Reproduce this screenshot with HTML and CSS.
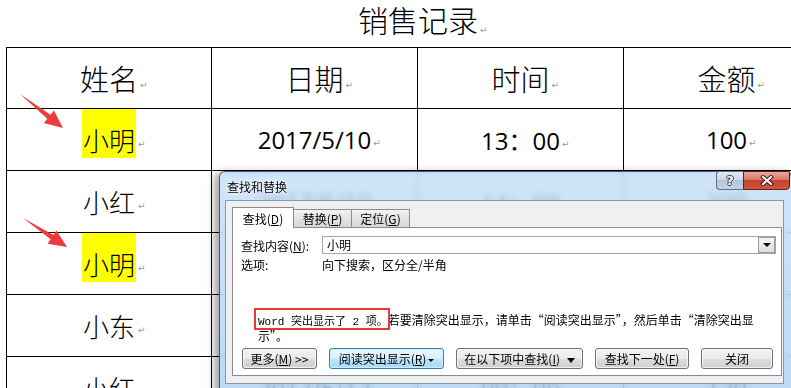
FILE: index.html
```html
<!DOCTYPE html>
<html lang="zh-CN">
<head>
  <meta charset="UTF-8" />
  <title>销售记录</title>
  <link rel="stylesheet" href="styles.css">
</head>
<body>

  <div class="doc">
    <h1 class="doc-title"><span class="t">销售记录<i class="ret">↵</i></span></h1>

    <table class="sales">
      <colgroup>
        <col class="c1"><col class="c2"><col class="c3"><col class="c4">
      </colgroup>
      <tr class="head">
        <td><span class="t">姓名<i class="ret">↵</i></span></td>
        <td><span class="t">日期<i class="ret">↵</i></span></td>
        <td><span class="t">时间<i class="ret">↵</i></span></td>
        <td><span class="t">金额<i class="ret">↵</i></span></td>
      </tr>
      <tr>
        <td><span class="t nm hl">小明<i class="ret">↵</i></span></td>
        <td class="num"><span class="t">2017/5/10<i class="ret">↵</i></span></td>
        <td class="num"><span class="t">13：00<i class="ret">↵</i></span></td>
        <td class="num"><span class="t">100<i class="ret">↵</i></span></td>
      </tr>
      <tr>
        <td><span class="t nm">小红<i class="ret">↵</i></span></td>
        <td class="num"><span class="t">2017/5/10<i class="ret">↵</i></span></td>
        <td class="num"><span class="t">14：00<i class="ret">↵</i></span></td>
        <td class="num"><span class="t">200<i class="ret">↵</i></span></td>
      </tr>
      <tr>
        <td><span class="t nm hl">小明<i class="ret">↵</i></span></td>
        <td class="num"><span class="t">2017/5/11<i class="ret">↵</i></span></td>
        <td class="num"><span class="t">10：00<i class="ret">↵</i></span></td>
        <td class="num"><span class="t">150<i class="ret">↵</i></span></td>
      </tr>
      <tr>
        <td><span class="t nm">小东<i class="ret">↵</i></span></td>
        <td class="num"><span class="t">2017/5/11<i class="ret">↵</i></span></td>
        <td class="num"><span class="t">15：00<i class="ret">↵</i></span></td>
        <td class="num"><span class="t">300<i class="ret">↵</i></span></td>
      </tr>
      <tr>
        <td><span class="t nm">小红<i class="ret">↵</i></span></td>
        <td class="num"><span class="t">2017/5/12<i class="ret">↵</i></span></td>
        <td class="num"><span class="t">09：00<i class="ret">↵</i></span></td>
        <td class="num"><span class="t">120<i class="ret">↵</i></span></td>
      </tr>
    </table>
  </div>

  <!-- red pointer arrows drawn on the screenshot -->
  <svg class="arrows" width="791" height="388" viewBox="0 0 791 388">
    <polygon points="20,94 50.5,114.8 53.9,110.5 63,128 43.9,123.1 47.3,118.8" />
    <polygon points="23,218 53.4,235 56.4,230.4 67,247 47.6,243.8 50.6,239.2" />
  </svg>

  <div class="dlg">
    <div class="dlg-bar">
      <div class="dlg-title">查找和替换</div>
      <div class="cap">
        <div class="cap-help">?</div>
        <div class="cap-close">
          <svg width="14" height="11" viewBox="0 0 14 11">
            <path d="M3 2 L11 9 M11 2 L3 9" stroke="#3a1a16" stroke-width="4" stroke-linecap="square" fill="none"/>
            <path d="M3 2 L11 9 M11 2 L3 9" stroke="#fff" stroke-width="2" stroke-linecap="square" fill="none"/>
          </svg>
        </div>
      </div>
    </div>

    <div class="dlg-body">
      <div class="tabs">
        <div class="tab active">查找(<u>D</u>)</div>
        <div class="tab">替换(<u>P</u>)</div>
        <div class="tab">定位(<u>G</u>)</div>
      </div>

      <div class="panel">
        <div class="row find-row">
          <span class="lbl">查找内容(<u>N</u>):</span>
          <div class="combo">
            <span class="combo-text">小明</span>
            <span class="combo-btn"><i class="caret"></i></span>
          </div>
        </div>
        <div class="row opt-row">
          <span class="lbl">选项:</span>
          <span>向下搜索，区分全/半角</span>
        </div>

        <p class="msg"><span class="mark">Word 突出显示了 2 项。</span>若要清除突出显示，请单击“阅读突出显示”，然后单击“清除突出显<br>示”。</p>

        <div class="btns">
          <button class="btn b-more">更多(<u>M</u>) &gt;&gt;</button>
          <button class="btn b-read default">阅读突出显示(<u>R</u>)<i class="caret"></i></button>
          <button class="btn b-in">在以下项中查找(<u>I</u>) <i class="caret"></i></button>
          <button class="btn b-next">查找下一处(<u>F</u>)</button>
          <button class="btn b-close">关闭</button>
        </div>
      </div>
    </div>
  </div>

</body>
</html>
```

FILE: styles.css
```css
* {
  margin: 0;
  padding: 0;
  box-sizing: border-box;
}

body {
  position: relative;
  width: 791px;
  height: 388px;
  overflow: hidden;
  background: #fff;
  color: #000;
  font-family: "Noto Sans CJK SC", sans-serif;
}

/* document */

.doc {
  width: 830px;
  padding-left: 6px;
}

.doc-title {
  height: 47px;
  line-height: 38px;
  text-align: center;
  font-size: 30px;
  font-weight: 300;
}

.t {
  position: relative;
}

.ret {
  position: absolute;
  left: 100%;
  bottom: 6px;
  margin-left: 2px;
  font-family: "DejaVu Sans", sans-serif;
  font-style: normal;
  font-weight: normal;
  font-size: 9px;
  line-height: 1;
  color: #999;
}

.sales {
  width: 824px;
  table-layout: fixed;
  border-collapse: collapse;
}

.sales col {
  width: 206px;
}

.sales col.c1 {
  width: 205px;
}

.sales td {
  height: 61px;
  padding: 0;
  border: 1px solid #000;
  text-align: center;
  vertical-align: middle;
  font-size: 26px;
  font-weight: 300;
}

.sales .head td {
  font-size: 29px;
}

.sales .head .ret {
  bottom: 9px;
}

.nm {
  display: inline-block;
  padding: 14px 1px 2px;
  margin-bottom: 12px;
  line-height: 33px;
}

.nm .ret {
  bottom: 9px;
}

.hl {
  background: #ffff00;
}

.num {
  font-family: "Open Sans", "Noto Sans CJK SC", sans-serif;
}

.sales td.num {
  font-size: 24px;
  font-weight: normal;
}

.num .ret {
  bottom: 8px;
}

.arrows {
  position: absolute;
  left: 0;
  top: 0;
  fill: #ec3b3b;
}

/* find & replace dialog */

.dlg {
  position: absolute;
  left: 219px;
  top: 171px;
  width: 573px;
  height: 222px;
  border: 1px solid rgba(40, 58, 84, 0.8);
  border-radius: 6px 6px 0 0;
  background: linear-gradient(180deg, rgba(196, 222, 248, 0.8), rgba(172, 208, 243, 0.8));
  backdrop-filter: blur(3px);
  box-shadow: -4px 2px 8px rgba(0, 0, 0, 0.4);
  font-size: 12px;
}

.dlg-bar {
  display: flex;
  height: 28px;
}

.dlg-title {
  flex: 1;
  padding: 8px 0 0 7px;
  line-height: 14px;
  text-shadow: 0 0 6px #fff, 0 0 3px #fff;
}

.cap {
  display: flex;
  height: 19px;
  margin: -1px 1px 0 0;
}

.cap-help {
  width: 27px;
  border: 1px solid #5f7088;
  border-right: none;
  border-radius: 3px 0 0 4px;
  background: linear-gradient(180deg, #e2ebf6 0%, #cbd9ea 45%, #b3c5dc 50%, #c3d3e6 100%);
  color: #fff;
  font-family: "DejaVu Sans", sans-serif;
  font-weight: bold;
  font-size: 13px;
  line-height: 17px;
  text-align: center;
  text-shadow: 1px 0 #2c3a4e, -1px 0 #2c3a4e, 0 1px #2c3a4e, 0 -1px #2c3a4e;
}

.cap-close {
  display: flex;
  align-items: center;
  justify-content: center;
  width: 47px;
  border: 1px solid #5a231c;
  border-radius: 0 0 4px 0;
  background: linear-gradient(180deg, #eaa79a 0%, #d97a68 45%, #c5432f 50%, #d2543d 100%);
}

.dlg-body {
  width: 559px;
  height: 184px;
  margin-left: 5px;
  padding: 6px 1px 7px 6px;
  background: #f0f0f0;
  border: 1px solid #8598b0;
}

.tabs {
  position: relative;
  z-index: 1;
  display: flex;
  align-items: flex-start;
  height: 21px;
}

.tab {
  width: 58px;
  height: 18px;
  margin-top: 2px;
  border: 1px solid #898c95;
  border-bottom: none;
  border-left: none;
  background: linear-gradient(180deg, #f4f4f4, #e3e3e3 50%, #d6d6d6);
  line-height: 17px;
  text-align: center;
}

.tab.active {
  width: 62px;
  height: 21px;
  margin-top: 0;
  border-left: 1px solid #898c95;
  background: #fff;
  line-height: 21px;
}

.panel {
  height: 149px;
  margin-top: -1px;
  padding: 8px 6px 6px 8px;
  background: #fff;
  border: 1px solid #898c95;
}

.row {
  display: flex;
  align-items: center;
}

.lbl {
  width: 81px;
}

.find-row {
  height: 18px;
}

.combo {
  flex: 1;
  display: flex;
  height: 18px;
  margin-right: -1px;
  border: 1px solid #a5a7ac;
}

.combo-text {
  flex: 1;
  padding-left: 4px;
  line-height: 16px;
}

.combo-btn {
  display: flex;
  align-items: center;
  justify-content: center;
  width: 17px;
  height: 16px;
  border: 1px solid #9a9a9a;
  background: linear-gradient(180deg, #f6f6f6, #dedede);
}

.caret {
  display: inline-block;
  width: 0;
  height: 0;
  border-left: 4px solid transparent;
  border-right: 4px solid transparent;
  border-top: 4px solid #000;
  vertical-align: middle;
}

.opt-row {
  height: 16px;
  margin-top: 2px;
}

.msg {
  margin-top: 41px;
  padding-left: 17px;
  line-height: 14px;
  height: 28px;
}

.mark {
  position: relative;
  font-family: "Liberation Mono", "Noto Sans CJK SC", monospace;
  font-size: 11px;
}

.mark::after {
  content: "";
  position: absolute;
  left: -4px;
  right: -2px;
  top: -8px;
  bottom: -2px;
  border: 2px solid #ee3535;
}

.btns {
  display: flex;
  gap: 12px;
  margin-top: 7px;
  padding-left: 1px;
}

.btn {
  height: 21px;
  border: 1px solid #707070;
  border-radius: 3px;
  background: linear-gradient(180deg, #f2f2f2 0%, #ebebeb 50%, #dddddd 50%, #cfcfcf 100%);
  box-shadow: inset 0 0 0 1px rgba(255, 255, 255, 0.7);
  font-family: "Noto Sans CJK SC", sans-serif;
  font-size: 12px;
  line-height: 17px;
  color: #000;
}

.btn.default {
  border-color: #3c7fb1;
  background: linear-gradient(180deg, #eaf6fd 0%, #d9f0fc 50%, #bee6fd 50%, #a7d9f5 100%);
  box-shadow: inset 0 0 0 1px #cdeefc;
}

.btn .caret {
  margin-left: 2px;
  border-left-width: 3px;
  border-right-width: 3px;
  border-top-width: 3px;
}

.b-in .caret {
  margin-left: 4px;
  border-left-width: 4px;
  border-right-width: 4px;
  border-top-width: 5px;
}

.b-more { width: 75px; }
.b-read { width: 115px; }
.b-in { width: 127px; }
.b-next { width: 94px; }
.b-close { width: 72px; }
```
